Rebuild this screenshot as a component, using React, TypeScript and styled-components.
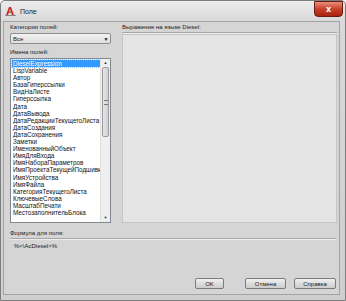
import {FC} from "react";
import styled, {createGlobalStyle} from "styled-components";

const GlobalStyle = createGlobalStyle`
  html, body {
    margin: 0;
    padding: 0;
    background: #f4f4f4;
  }
  body {
    font-family: Tahoma, "Liberation Sans", Arial, sans-serif;
    color: #1a1a1a;
  }
`

const Window = styled.div`
  width: 346px;
  height: 301px;
  box-sizing: border-box;
  border: 1px solid #7d7d7d;
  border-radius: 5px 5px 0 0;
  background: linear-gradient(#ececec, #d9d9d9 20px, #cfcfcf);
  padding: 0 5px 5px 2px;
  display: flex;
  flex-direction: column;
`

const TitleBar = styled.div`
  height: 20px;
  display: flex;
  align-items: center;
  padding-left: 2px;
  gap: 4px;
`

const Title = styled.span`
  font-size: 7px;
  color: #222;
  flex: 1;
`

const CloseButton = styled.div`
  width: 27px;
  height: 14px;
  margin-top: -4px;
  margin-right: -3px;
  border: 1px solid #6b1b12;
  border-radius: 0 0 4px 4px;
  background: linear-gradient(#e8907c, #c9412a 50%, #a8220f);
  display: flex;
  align-items: center;
  justify-content: center;
  color: #fff;
  font-size: 8px;
  font-weight: bold;
  font-family: "DejaVu Sans", sans-serif;
`

const Client = styled.div`
  flex: 1;
  border: 1px solid #a3a3a3;
  background: #d5d5d5;
  padding: 2px 3px 5px 6px;
  display: flex;
  flex-direction: column;
`

const TopArea = styled.div`
  display: grid;
  grid-template-columns: 101px 215px;
  column-gap: 11px;
`

const Column = styled.div`
  display: flex;
  flex-direction: column;
`

const Label = styled.div<{ $top?: number }>`
  font-size: 6px;
  line-height: 7px;
  height: 7px;
  margin-top: ${p => p.$top ?? 0}px;
  margin-bottom: 2px;
  white-space: nowrap;
`

const GroupHeader = styled.div<{ $top?: number }>`
  font-size: 6px;
  line-height: 7px;
  padding-bottom: 1px;
  margin-top: ${p => p.$top ?? 0}px;
  border-bottom: 1px solid #a8a8a8;
  box-shadow: 0 1px 0 #ececec;
  white-space: nowrap;
`

const Select = styled.div`
  height: 11px;
  box-sizing: border-box;
  border: 1px solid #8e8e8e;
  border-radius: 2px;
  background: linear-gradient(#f2f2f2, #dedede);
  display: flex;
  align-items: center;
  padding-left: 2px;
  font-size: 6px;
`

const SelectText = styled.span`
  flex: 1;
`

const Arrow = styled.span`
  font-size: 5px;
  width: 8px;
  text-align: center;
  color: #111;
`

const ListBox = styled.div`
  height: 165px;
  box-sizing: border-box;
  border: 1px solid #828790;
  background: #fff;
  display: flex;
  overflow: hidden;
`

const Items = styled.div`
  flex: 1;
  padding: 1px 0 0 1px;
  overflow: hidden;
`

const Item = styled.div<{ $selected?: boolean }>`
  height: 7.1px;
  font-size: 6.3px;
  line-height: 7.1px;
  padding-left: 1px;
  white-space: nowrap;
  overflow: hidden;
  background: ${p => (p.$selected ? "#3399ff" : "transparent")};
  color: ${p => (p.$selected ? "#fff" : "#111")};
  outline: ${p => (p.$selected ? "1px dotted #9ccaff" : "none")};
`

const ScrollBar = styled.div`
  width: 9px;
  background: #efefef;
  border-left: 1px solid #e2e2e2;
  display: flex;
  flex-direction: column;
`

const ScrollArrow = styled.div`
  height: 8px;
  font-size: 4px;
  line-height: 8px;
  text-align: center;
  color: #333;
`

const Thumb = styled.div`
  height: 68px;
  margin: 0 1px;
  border: 1px solid #9a9a9a;
  border-radius: 2px;
  background: linear-gradient(90deg, #e6e6e6, #d0d0d0);
  display: flex;
  align-items: center;
  justify-content: center;
`

const Grip = styled.div`
  width: 4px;
  height: 3px;
  border-top: 1px solid #777;
  border-bottom: 1px solid #777;
`

const Track = styled.div`
  flex: 1;
`

const Expression = styled.div`
  margin-top: 1px;
  height: 189px;
  box-sizing: border-box;
  border: 1px solid #c6c6c6;
  background: #e4e4e4;
`

const FormulaText = styled.div`
  font-size: 6px;
  line-height: 7px;
  padding: 4px 0 0 4px;
`

const ButtonRow = styled.div`
  margin-top: auto;
  display: flex;
  justify-content: flex-end;
  align-items: center;
`

const Button = styled.div<{ $w: number; $gap: number }>`
  width: ${p => p.$w}px;
  height: 11px;
  margin-left: ${p => p.$gap}px;
  box-sizing: border-box;
  border: 1px solid #7a7a7a;
  border-radius: 2px;
  background: linear-gradient(#f1f1f1, #dcdcdc 50%, #cdcdcd);
  font-size: 6px;
  display: flex;
  align-items: center;
  justify-content: center;
`

const fieldNames = [
    "DieselExpression",
    "LispVariable",
    "Автор",
    "БазаГиперссылки",
    "ВидНаЛисте",
    "Гиперссылка",
    "Дата",
    "ДатаВывода",
    "ДатаРедакцииТекущегоЛиста",
    "ДатаСоздания",
    "ДатаСохранения",
    "Заметки",
    "ИменованныйОбъект",
    "ИмяДляВхода",
    "ИмяНабораПараметров",
    "ИмяПроектаТекущейПодшивки",
    "ИмяУстройства",
    "ИмяФайла",
    "КатегорияТекущегоЛиста",
    "КлючевыеСлова",
    "МасштабПечати",
    "МестозаполнительБлока",
]

const AppIcon: FC = () => (
    <svg width="11" height="10" viewBox="0 0 11 10">
        <path d="M1 9 L4 1 L6 1 L9 9 L7 9 L5 3 L3 9 Z" fill="#c8281c"/>
        <rect x="3.5" y="5.5" width="3" height="1.2" fill="#c8281c"/>
        <rect x="0" y="9" width="11" height="1" fill="#8a8a8a"/>
    </svg>
)

const App: FC = () => {
    return (
        <>
            <GlobalStyle/>
            <Window>
                <TitleBar>
                    <AppIcon/>
                    <Title>Поле</Title>
                    <CloseButton>x</CloseButton>
                </TitleBar>
                <Client>
                    <TopArea>
                        <Column>
                            <Label>Категории полей:</Label>
                            <Select>
                                <SelectText>Все</SelectText>
                                <Arrow>▼</Arrow>
                            </Select>
                            <Label $top={5}>Имена полей:</Label>
                            <ListBox>
                                <Items>
                                    {fieldNames.map((name, i) => (
                                        <Item key={name} $selected={i === 0}>{name}</Item>
                                    ))}
                                </Items>
                                <ScrollBar>
                                    <ScrollArrow>▲</ScrollArrow>
                                    <Thumb><Grip/></Thumb>
                                    <Track/>
                                    <ScrollArrow>▼</ScrollArrow>
                                </ScrollBar>
                            </ListBox>
                        </Column>
                        <Column>
                            <GroupHeader>Выражение на языке Diesel:</GroupHeader>
                            <Expression/>
                        </Column>
                    </TopArea>
                    <GroupHeader $top={7}>Формула для поля:</GroupHeader>
                    <FormulaText>%&lt;\AcDiesel&gt;%</FormulaText>
                    <ButtonRow>
                        <Button $w={29} $gap={0}>OK</Button>
                        <Button $w={41} $gap={21}>Отмена</Button>
                        <Button $w={42} $gap={8}>Справка</Button>
                    </ButtonRow>
                </Client>
            </Window>
        </>
    )
};

export default App
